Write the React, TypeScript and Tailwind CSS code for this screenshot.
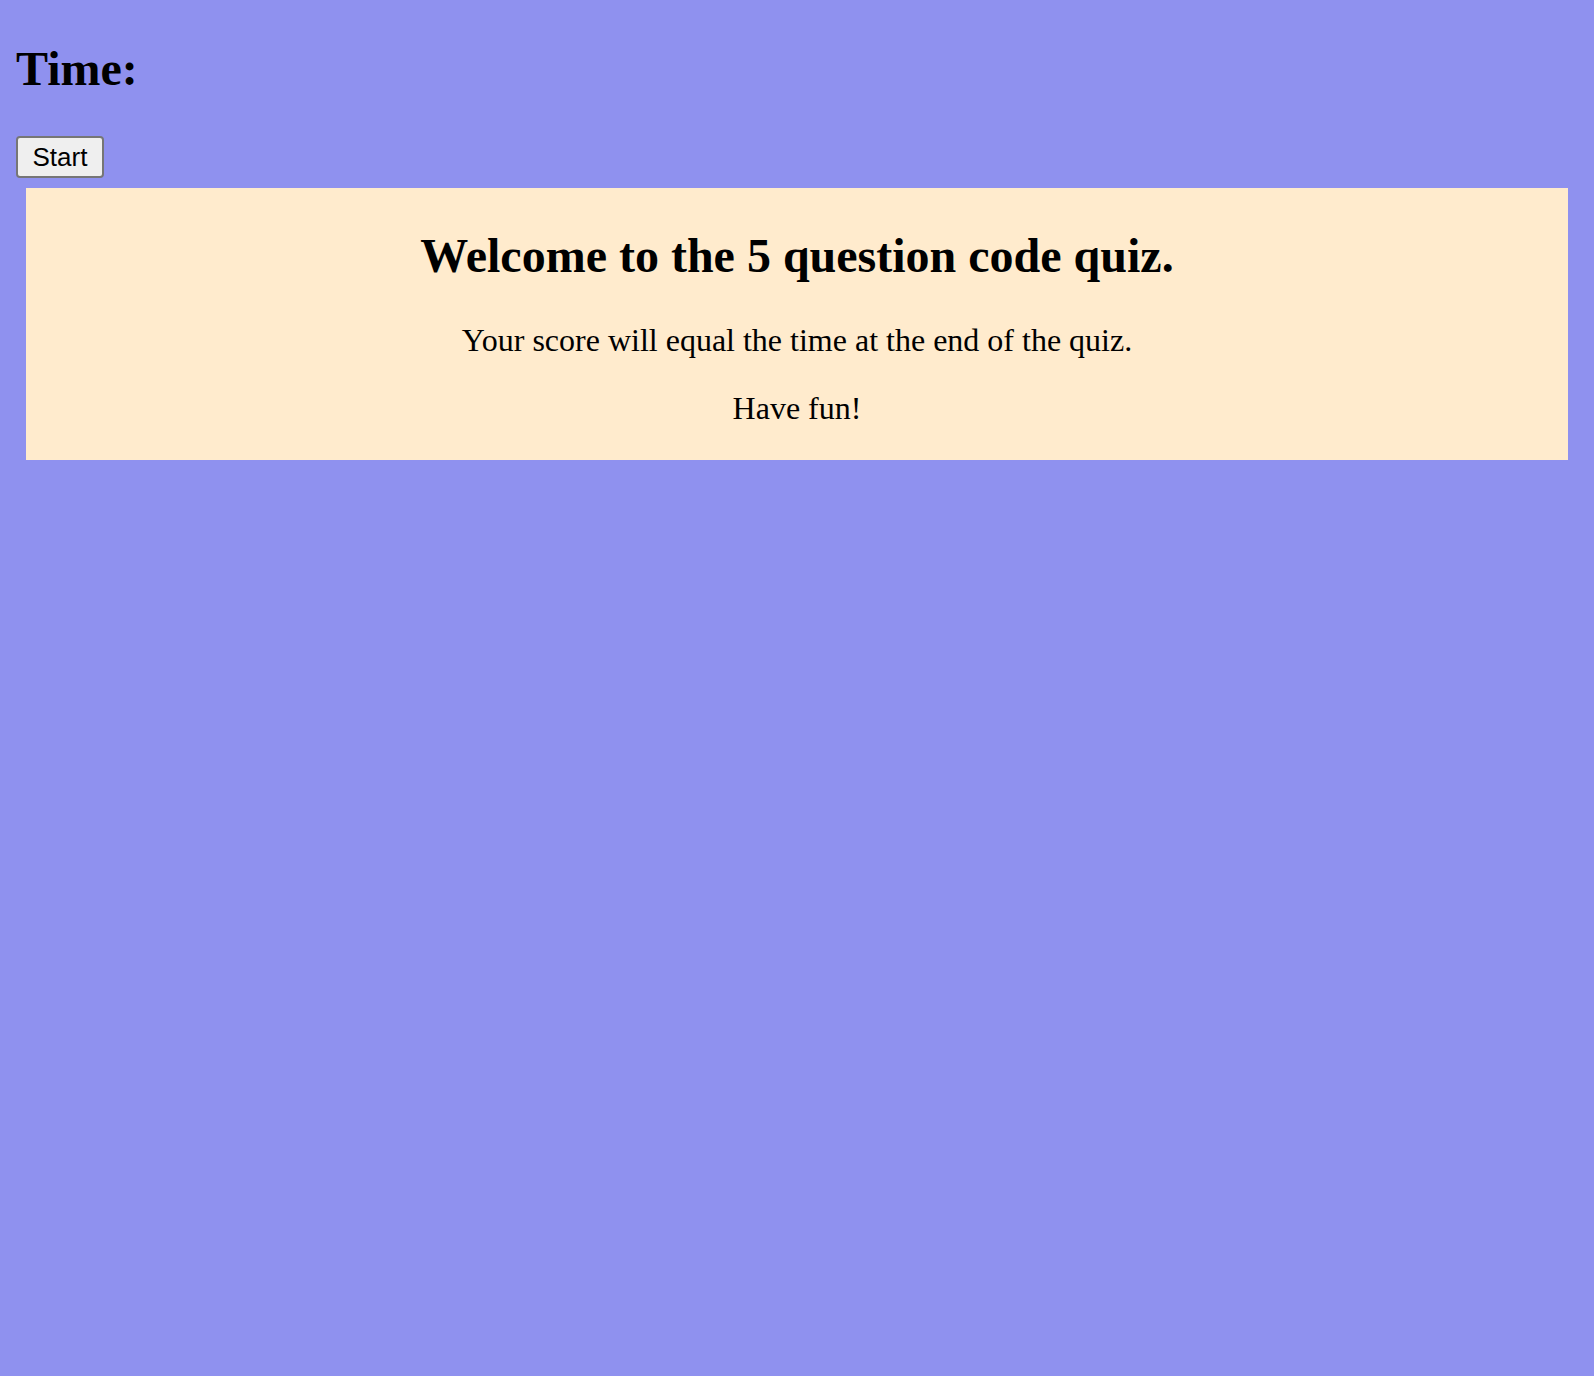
export default function App() {
  return (
    <div className="min-h-screen bg-[#8f91ef] px-4 pt-[42px] pb-px font-['Liberation_Serif',serif] text-black">
      <h1 className="m-0 text-[48px] leading-[53px] font-bold">Time:</h1>

      <button className="mt-[41px] flex h-[42px] w-[88px] items-center justify-center rounded-[4px] border-2 border-[#767676] bg-[#efefef] font-['Liberation_Sans',Arial,sans-serif] text-[26px] leading-none">
        Start
      </button>

      <div className="mx-[10px] mt-[10px] bg-[#ffebcd] pt-[41px] pb-[34px] text-center">
        <h1 className="m-0 text-[48px] leading-[53px] font-bold">Welcome to the 5 question code quiz.</h1>
        <p className="mt-[41px] text-[32px] leading-[35px]">Your score will equal the time at the end of the quiz.</p>
        <p className="mt-[33px] text-[32px] leading-[35px]">Have fun!</p>
      </div>
    </div>
  );
}
